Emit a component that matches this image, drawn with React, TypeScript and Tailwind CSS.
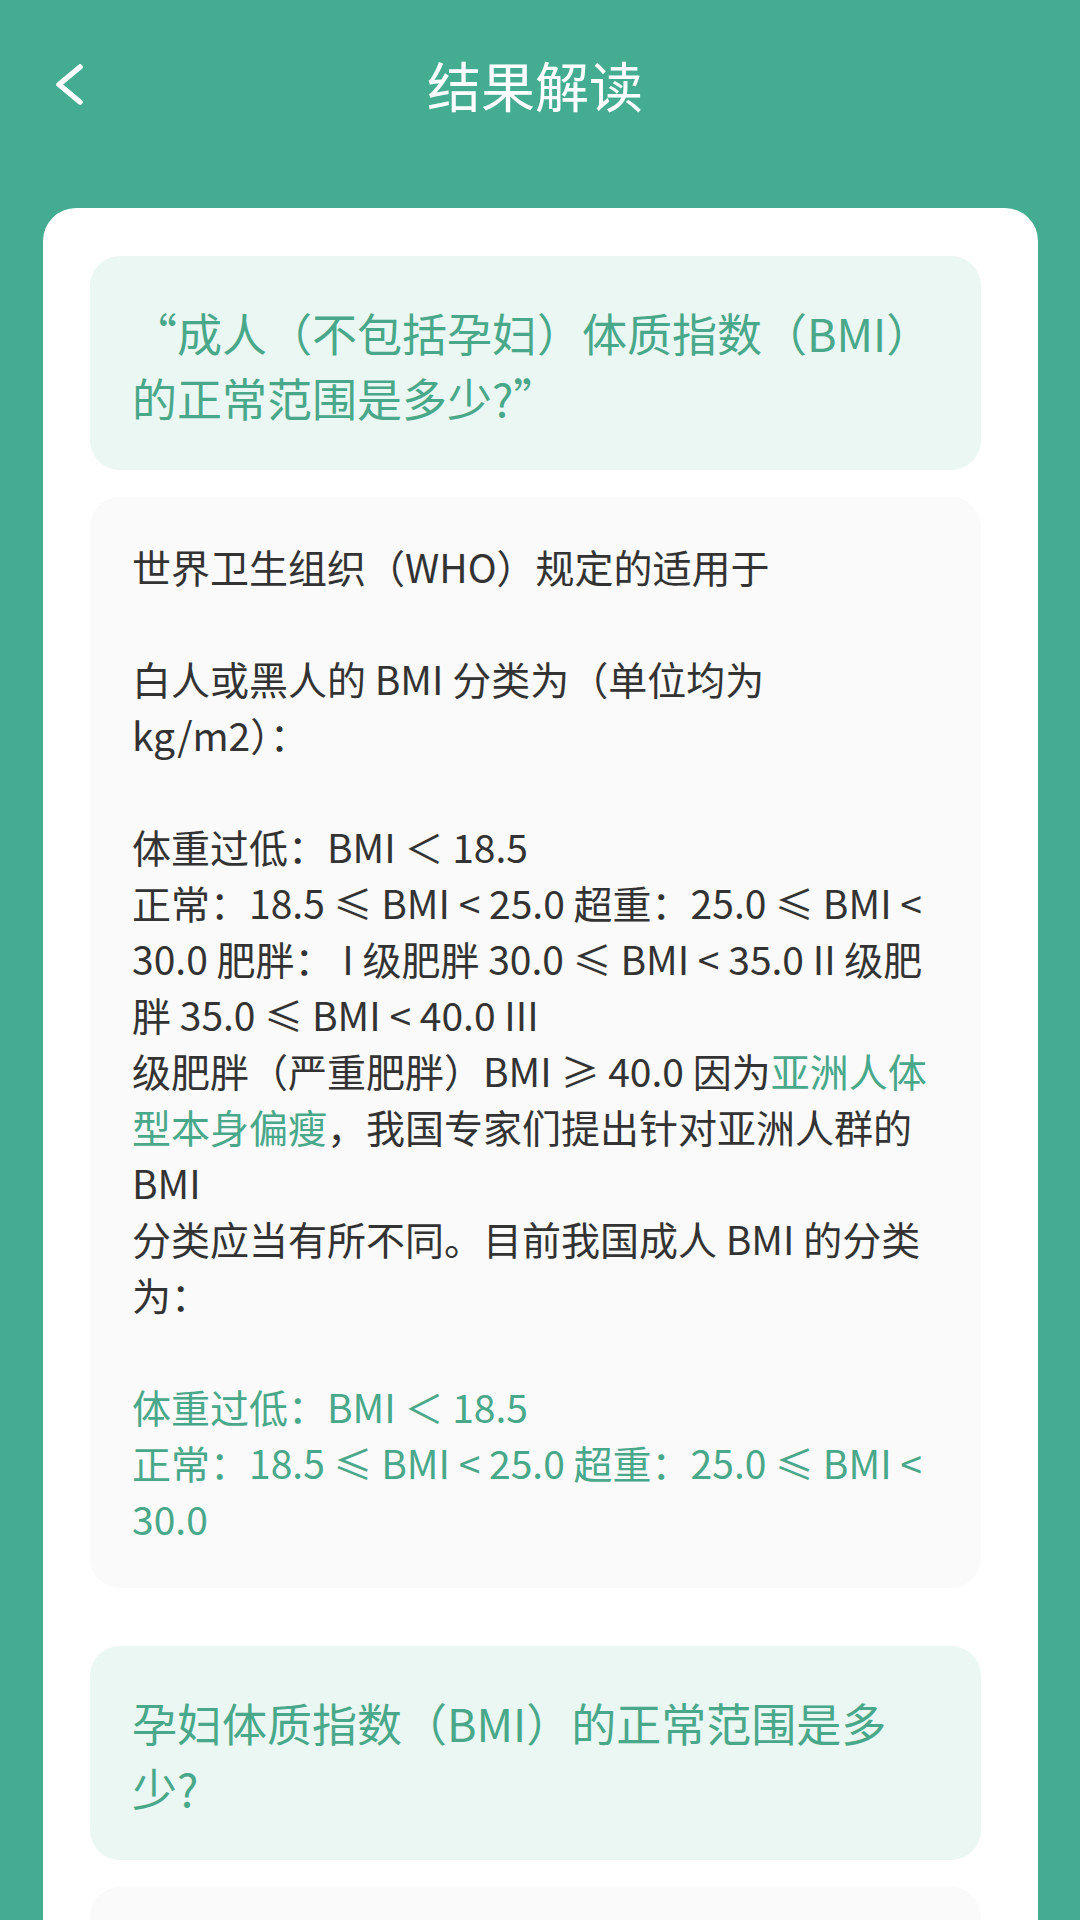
import React from "react";

type Seg = { t: string; g?: boolean };

const answerLines: Seg[][] = [
  [{ t: "世界卫生组织（WHO）规定的适用于" }],
  [],
  [{ t: "白人或黑人的 BMI 分类为（单位均为" }],
  [{ t: "kg/m2）：" }],
  [],
  [{ t: "体重过低：BMI ＜ 18.5" }],
  [{ t: "正常：18.5 ≤ BMI < 25.0 超重：25.0 ≤ BMI <" }],
  [{ t: "30.0 肥胖： I 级肥胖 30.0 ≤ BMI < 35.0 II 级肥" }],
  [{ t: "胖 35.0 ≤ BMI < 40.0 III" }],
  [{ t: "级肥胖（严重肥胖）BMI ≥ 40.0 因为" }, { t: "亚洲人体", g: true }],
  [{ t: "型本身偏瘦", g: true }, { t: "，我国专家们提出针对亚洲人群的" }],
  [{ t: "BMI" }],
  [{ t: "分类应当有所不同。目前我国成人 BMI 的分类" }],
  [{ t: "为：" }],
  [],
  [{ t: "体重过低：BMI ＜ 18.5", g: true }],
  [{ t: "正常：18.5 ≤ BMI < 25.0 超重：25.0 ≤ BMI <", g: true }],
  [{ t: "30.0", g: true }],
];

function Question({ lines }: { lines: string[] }) {
  return (
    <div className="bg-[#eaf7f3] rounded-[30px] pl-[42px] pr-[30px] pt-[44px] pb-[40px]">
      {lines.map((l, i) => (
        <div key={i} className="text-[45px] leading-[65px] text-[#48a889] whitespace-pre">{l}</div>
      ))}
    </div>
  );
}

function Answer({ lines }: { lines: Seg[][] }) {
  return (
    <div className="bg-[#fafafa] rounded-[30px] pl-[42px] pr-[30px] pt-[41px] pb-[42px]">
      {lines.map((line, i) => (
        <div key={i} className="h-[56px] text-[39px] leading-[56px] text-[#333333] whitespace-pre">
          {line.map((s, j) => (
            <span key={j} className={s.g ? "text-[#48a889]" : ""}>{s.t}</span>
          ))}
        </div>
      ))}
    </div>
  );
}

export default function App() {
  return (
    <div className="w-[1080px] h-[1920px] overflow-hidden bg-[#44ad91] font-['Noto_Sans_CJK_SC',sans-serif]">
      <header className="h-[208px] pt-[46px]">
        <div className="grid grid-cols-[1fr_auto_1fr] items-center h-[78px]">
          <div className="pl-[52px]">
            <svg width="32" height="48" viewBox="0 0 32 48" fill="none" stroke="white" strokeWidth="5.5" strokeLinecap="round" strokeLinejoin="round">
              <path d="M28 6 L7 23.5 L28 41" />
            </svg>
          </div>
          <h1 className="text-[54px] leading-[78px] text-white font-normal mr-[10px]">结果解读</h1>
          <div />
        </div>
      </header>

      <main className="ml-[43px] mr-[42px] bg-white rounded-t-[33px] pt-[48px] pl-[47px] pr-[57px] h-[1712px]">
        <Question lines={["“成人（不包括孕妇）体质指数（BMI）", "的正常范围是多少?”"]} />
        <div className="mt-[27px]">
          <Answer lines={answerLines} />
        </div>
        <div className="mt-[58px]">
          <Question lines={["孕妇体质指数（BMI）的正常范围是多", "少?"]} />
        </div>
        <div className="mt-[27px] bg-[#fafafa] rounded-[30px] h-[300px]" />
      </main>
    </div>
  );
}
